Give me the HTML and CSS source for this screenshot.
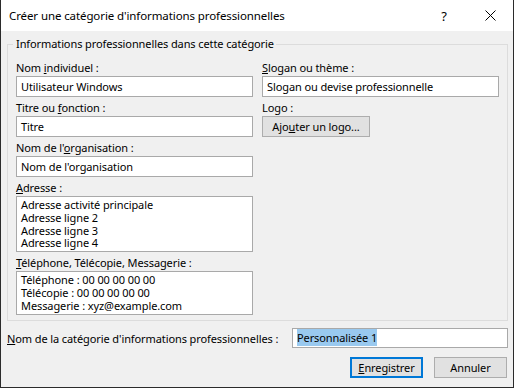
FILE: index.html
```html
<!DOCTYPE html>
<html lang="fr">
<head>
  <meta charset="UTF-8">
  <title>Créer une catégorie d'informations professionnelles</title>
  <link rel="stylesheet" href="styles.css">
</head>
<body>

  <div class="window">
    <div class="titlebar">
      <span class="title">Créer une catégorie d'informations professionnelles</span>
      <span class="caption-btn help">?</span>
      <span class="caption-btn close">
        <svg width="11" height="11" viewBox="0 0 11 11">
          <path d="M0.5 0.5 L10.5 10.5 M10.5 0.5 L0.5 10.5" stroke="#000" stroke-width="1" fill="none"/>
        </svg>
      </span>
    </div>

    <div class="dialog-body">
      <fieldset class="group">
        <legend>Informations professionnelles dans cette catégorie</legend>
        <div class="columns">
          <div class="col">
            <div class="field">
              <label>Nom <u>i</u>ndividuel :</label>
              <div class="edit">Utilisateur Windows</div>
            </div>
            <div class="field">
              <label>Titre ou <u>f</u>onction :</label>
              <div class="edit">Titre</div>
            </div>
            <div class="field">
              <label>Nom de l'<u>o</u>rganisation :</label>
              <div class="edit">Nom de l'organisation</div>
            </div>
            <div class="field">
              <label><u>A</u>dresse :</label>
              <div class="memo address">
                <div>Adresse activité principale</div>
                <div>Adresse ligne 2</div>
                <div>Adresse ligne 3</div>
                <div>Adresse ligne 4</div>
              </div>
            </div>
            <div class="field last">
              <label><u>T</u>éléphone, Télécopie, Messagerie :</label>
              <div class="memo phones">
                <div>Téléphone : 00 00 00 00 00</div>
                <div>Télécopie : 00 00 00 00 00</div>
                <div>Messagerie : xyz@example.com</div>
              </div>
            </div>
          </div>

          <div class="col">
            <div class="field">
              <label><u>S</u>logan ou thème :</label>
              <div class="edit">Slogan ou devise professionnelle</div>
            </div>
            <div class="field">
              <label>Logo :</label>
              <button class="btn logo-btn">Ajo<u>u</u>ter un logo...</button>
            </div>
          </div>
        </div>
      </fieldset>

      <div class="name-row">
        <label><u>N</u>om de la catégorie d'informations professionnelles :</label>
        <div class="edit name-edit"><span class="sel">Personnalisée 1</span></div>
      </div>

      <div class="buttons">
        <button class="btn default"><u>E</u>nregistrer</button>
        <button class="btn">Annuler</button>
      </div>
    </div>
  </div>

</body>
</html>
```

FILE: styles.css
```css
* { box-sizing: border-box; margin: 0; padding: 0; }

body {
  font-family: "Noto Sans", "Open Sans", sans-serif;
  font-size: 11px;
  letter-spacing: -0.1px;
  color: #000;
  background: #fff;
}

.window {
  width: 514px;
  height: 388px;
  background: #f0f0f0;
  border: 1px solid #2b2b2b;
  border-top: none;
  display: flex;
  flex-direction: column;
}

/* barre de titre */
.titlebar {
  height: 31px;
  background: #fff;
  display: flex;
  align-items: center;
  font-size: 11.5px;
}
.titlebar .title {
  flex: 1;
  padding-left: 8px;
}
.caption-btn {
  width: 46px;
  height: 31px;
  display: flex;
  align-items: center;
  justify-content: center;
}
.caption-btn.help {
  font-size: 13px;
}

.dialog-body {
  flex: 1;
  display: flex;
  flex-direction: column;
}

/* groupe */
.group {
  margin: 5px 5px 0 6px;
  border: 1px solid #dcdcdc;
  padding: 7px 8px 5px 8px;
}
.group legend {
  margin-left: -3px;
  padding: 0 2px 0 3px;
  line-height: 16px;
}

.columns {
  display: flex;
  gap: 9px;
}
.col {
  width: 237px;
  display: flex;
  flex-direction: column;
}

.field {
  display: flex;
  flex-direction: column;
  margin-bottom: 2px;
}
.field.last { margin-bottom: 0; }
.field label {
  height: 17px;
  line-height: 17px;
}

.edit {
  height: 21px;
  line-height: 19px;
  background: #fff;
  border: 1px solid #a9a9a9;
  padding-left: 4px;
  white-space: nowrap;
}

.memo {
  background: #fff;
  border: 1px solid #a9a9a9;
  padding: 2px 4px 0 4px;
  line-height: 12.8px;
}
.memo.address { height: 56px; }
.memo.phones { height: 44px; }

.btn {
  font-family: inherit;
  font-size: 11px;
  letter-spacing: inherit;
  color: #000;
  height: 21px;
  background: #e1e1e1;
  border: 1px solid #adadad;
}
.logo-btn {
  width: 108px;
}

/* ligne du nom */
.name-row {
  display: flex;
  align-items: center;
  margin: 7px 5px 0 6px;
}
.name-row label {
  flex: 1;
}
.name-edit {
  width: 216px;
  height: 20px;
  line-height: 18px;
  padding-left: 4px;
}
.sel {
  background: #99c9ef;
  padding: 1px 0;
}

.buttons {
  display: flex;
  justify-content: flex-end;
  gap: 11px;
  margin: 9px 6px 0 0;
}
.buttons .btn {
  width: 73px;
}
.btn.default {
  border: 2px solid #0078d7;
}
```
